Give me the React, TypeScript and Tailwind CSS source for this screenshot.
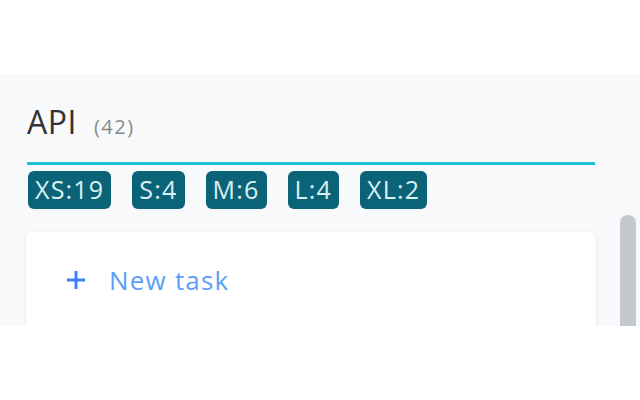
import React from 'react';

const sizes = [
  { label: 'XS', count: 19 },
  { label: 'S', count: 4 },
  { label: 'M', count: 6 },
  { label: 'L', count: 4 },
  { label: 'XL', count: 2 },
];

export default function App() {
  return (
    <div
      className="h-[400px] w-[640px] bg-white pt-[74px]"
      style={{ fontFamily: '"Open Sans", "Noto Sans", sans-serif' }}
    >
      <div className="flex h-[252px] overflow-hidden bg-[#f8f9fb]">
        {/* Column */}
        <div className="w-[620px] pl-[27px] pr-[25px] pt-[28px]">
          <div className="flex items-baseline">
            <span className="text-[32px] leading-[40px] tracking-[0.5px] text-[#333]">API</span>
            <span className="ml-[17px] text-[20px] tracking-[1.5px] text-[#8a8a8a]">(42)</span>
          </div>
          <div className="mt-[20px] h-[3px] bg-[#1fbfd6]" />

          {/* Size badges */}
          <div className="ml-px mt-[6px] flex gap-[21px]">
            {sizes.map((s) => (
              <span
                key={s.label}
                className="flex h-[38px] items-center rounded-[6px] bg-[#0b6378] px-[7px] text-[25px] tracking-[1.2px] text-[#dcf0f4]"
              >
                {s.label}:{s.count}
              </span>
            ))}
          </div>

          {/* Card */}
          <div className="-ml-px mt-[23px] h-[120px] w-[570px] rounded-[6px] bg-white px-[40px] pt-[34px] shadow-[0_1px_4px_rgba(0,0,0,0.08)]">
            <button className="flex items-center gap-[23px] text-[#5d9ef7]">
              <svg width="20" height="20" viewBox="0 0 20 20" className="text-[#3b82f6]">
                <path d="M10 1v18M1 10h18" stroke="currentColor" strokeWidth="3" />
              </svg>
              <span className="text-[26px] leading-[28px] tracking-[1.2px]">New task</span>
            </button>
          </div>
        </div>

        {/* Scrollbar */}
        <div className="mt-[141px] w-[16px] rounded-t-full bg-[#c4c8ce]" />
      </div>
    </div>
  );
}
